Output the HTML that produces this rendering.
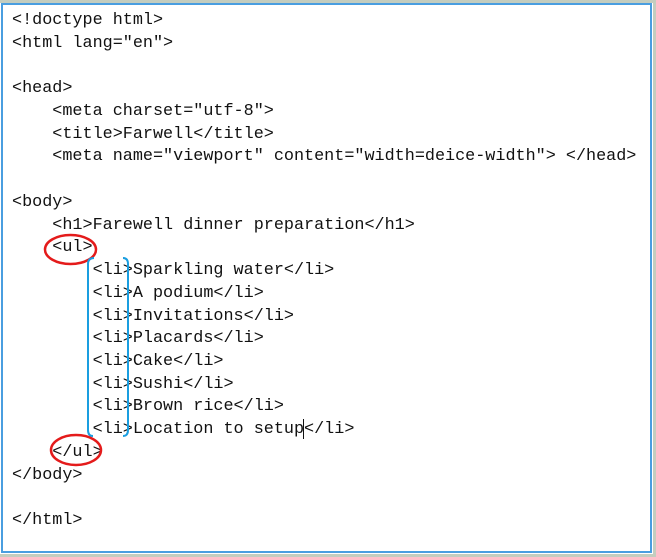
<!DOCTYPE html>
<html><head><meta charset="utf-8"><style>
html,body{margin:0;padding:0;background:#fff;}
body{width:656px;height:557px;position:relative;overflow:hidden;}
.frame{position:absolute;left:0;top:0;width:656px;height:557px;box-sizing:border-box;border-top:3px solid #c4cdbf;border-right:3px solid #c4cdbf;border-bottom:3px solid #c4cdbf;}
.inner{position:absolute;left:1px;top:3px;width:651px;height:550px;box-sizing:border-box;border:2px solid #4a9ee0;}
pre{position:absolute;left:12px;top:10px;margin:0;font-family:"Liberation Mono",monospace;font-size:16.8px;line-height:22.73px;color:#111;}
svg{position:absolute;left:0;top:0;}
</style></head><body>
<div class="frame"></div><div class="inner"></div>
<pre>&lt;!doctype html&gt;
&lt;html lang="en"&gt;

&lt;head&gt;
    &lt;meta charset="utf-8"&gt;
    &lt;title&gt;Farwell&lt;/title&gt;
    &lt;meta name="viewport" content="width=deice-width"&gt; &lt;/head&gt;

&lt;body&gt;
    &lt;h1&gt;Farewell dinner preparation&lt;/h1&gt;
    &lt;ul&gt;
        &lt;li&gt;Sparkling water&lt;/li&gt;
        &lt;li&gt;A podium&lt;/li&gt;
        &lt;li&gt;Invitations&lt;/li&gt;
        &lt;li&gt;Placards&lt;/li&gt;
        &lt;li&gt;Cake&lt;/li&gt;
        &lt;li&gt;Sushi&lt;/li&gt;
        &lt;li&gt;Brown rice&lt;/li&gt;
        &lt;li&gt;Location to setup&lt;/li&gt;
    &lt;/ul&gt;
&lt;/body&gt;

&lt;/html&gt;</pre>
<svg width="656" height="557">
<ellipse cx="70.5" cy="249.5" rx="25.5" ry="14.5" fill="none" stroke="#e41b1b" stroke-width="2.5"/>
<ellipse cx="76" cy="450" rx="25" ry="15" fill="none" stroke="#e41b1b" stroke-width="2.5"/>
<path d="M94 258 Q88 258 88 264 L88 430 Q88 436 93 436" fill="none" stroke="#1a9ee0" stroke-width="2"/>
<path d="M123 258 Q128 258 128 264 L128 430 Q128 436 123 436" fill="none" stroke="#1a9ee0" stroke-width="2"/>
<line x1="303.5" y1="419" x2="303.5" y2="439" stroke="#111" stroke-width="1"/>
</svg>
</body></html>
